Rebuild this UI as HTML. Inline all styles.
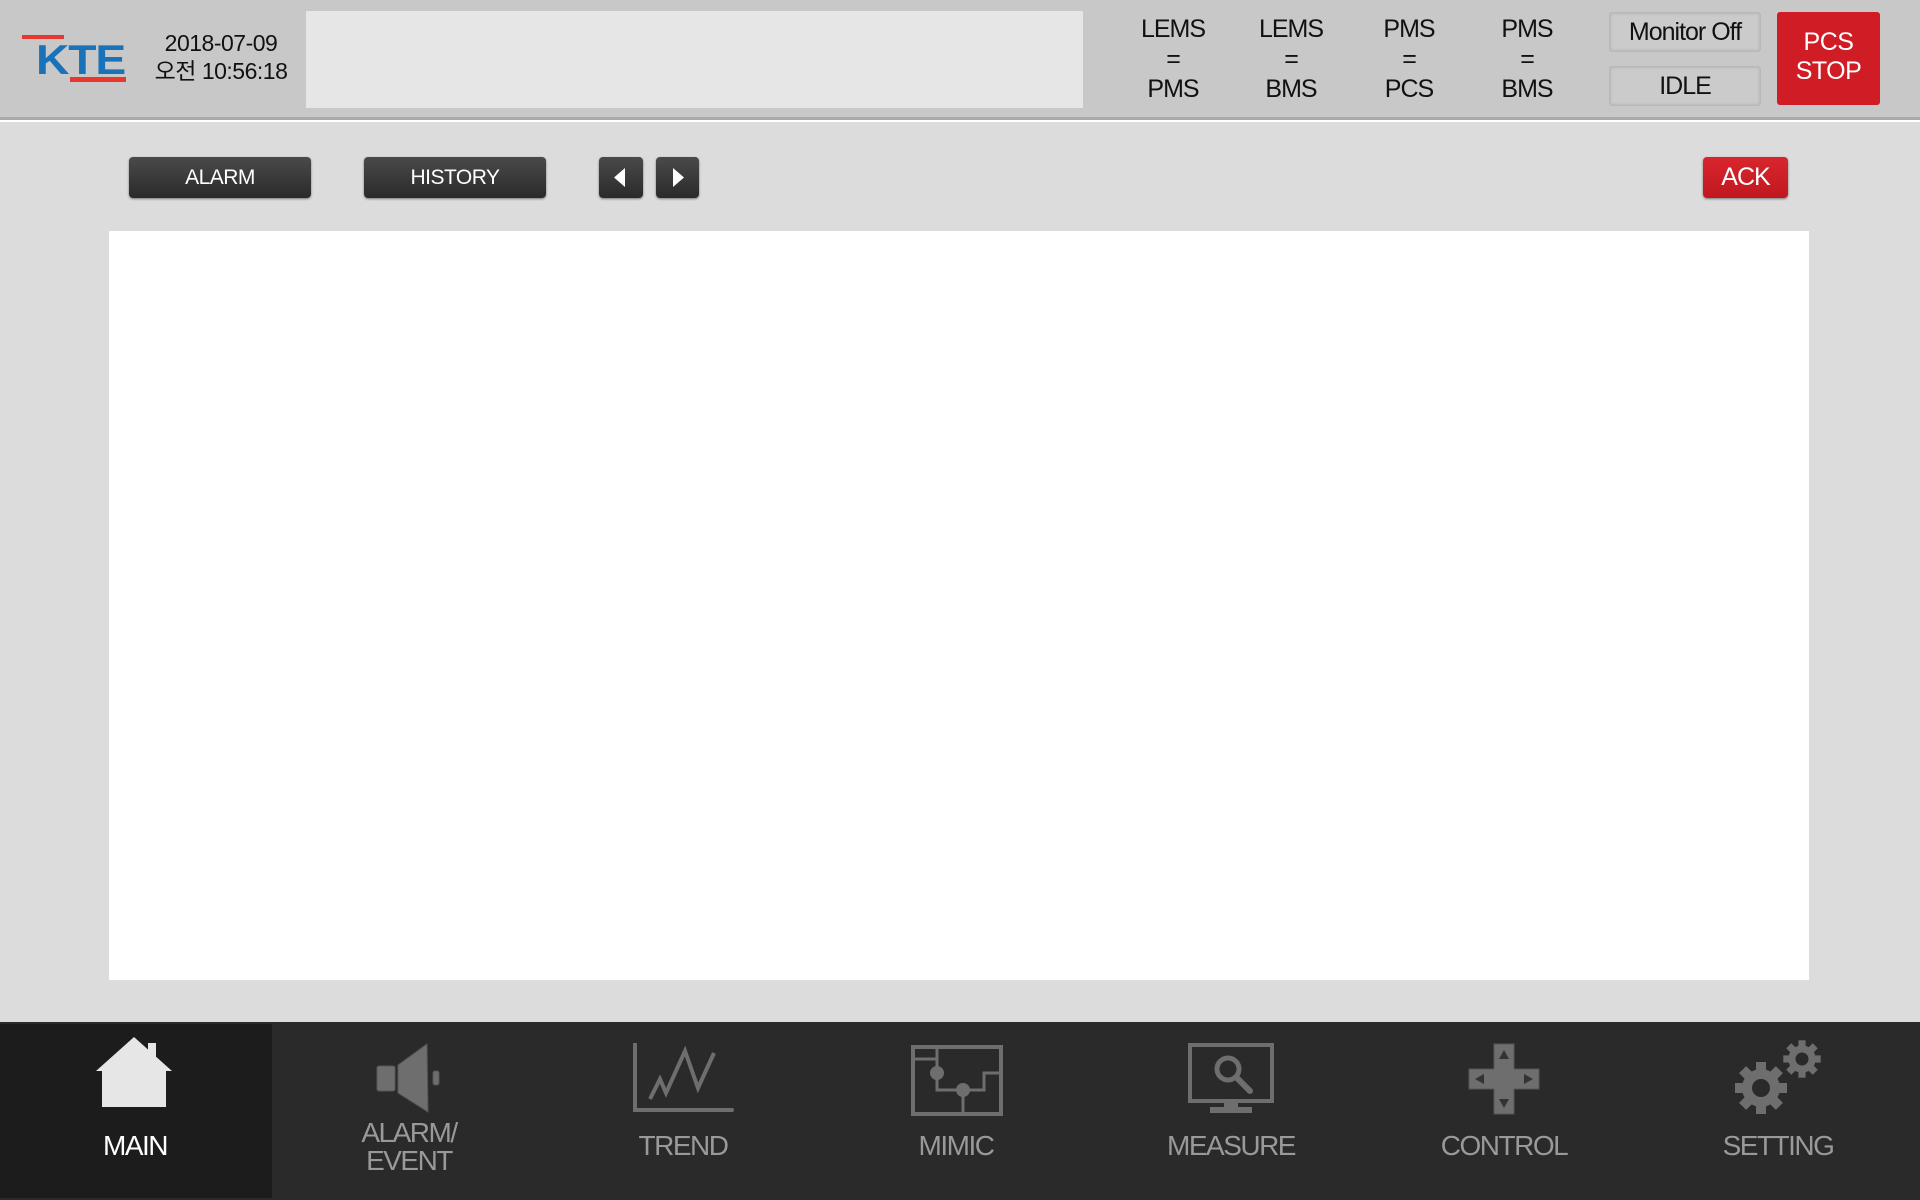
<!DOCTYPE html>
<html><head><meta charset="utf-8"><style>
*{margin:0;padding:0;box-sizing:border-box}
body{width:1920px;height:1200px;overflow:hidden;background:#dcdcdc;font-family:"Liberation Sans","Noto Sans CJK KR",sans-serif;position:relative}
.a{position:absolute}
.hdr{left:0;top:0;width:1920px;height:120px;background:#c8c8c8;border-bottom:3px solid #aaa}
.wl{left:0;top:120px;width:1920px;height:2px;background:#fff}
.st{width:120px;text-align:center;font-size:25px;color:#111;line-height:30px;letter-spacing:-1px}
.gb{background:#cbcbcb;border:1px solid #b8b8b8;border-radius:3px;box-shadow:inset 0 0 3px #aaa;text-align:center;font-size:25px;color:#111;letter-spacing:-1px}
.db{background:linear-gradient(#4a4a4a,#2a2a2a);border-radius:4px;box-shadow:0 1px 2px #777;color:#fff;font-size:21px;text-align:center;line-height:41px;letter-spacing:-0.5px}
.ft{left:0;top:1022px;width:1920px;height:178px;background:#2a2a2a}
.lb{width:274px;text-align:center;font-size:28px;color:#999;letter-spacing:-1.5px;line-height:30px}
</style></head><body>
<div class="a hdr"></div><div class="a wl"></div>
<div class="a" style="left:22px;top:35px;width:42px;height:4px;background:#e8372c"></div>
<div class="a" style="left:70px;top:77px;width:56px;height:5px;background:#e8372c"></div>
<div class="a" style="left:36px;top:38px;font-size:42px;font-weight:bold;color:#1a72b8;letter-spacing:-1px;line-height:44px;transform:scaleX(1.1);transform-origin:left">KTE</div>
<div class="a" style="left:148px;top:29px;width:146px;font-size:23px;line-height:28px;text-align:center;color:#111;letter-spacing:-0.5px">2018-07-09<br>오전 10:56:18</div>
<div class="a" style="left:306px;top:11px;width:777px;height:97px;background:#e6e6e6"></div>
<div class="a st" style="left:1113px;top:14px">LEMS<br>=<br>PMS</div>
<div class="a st" style="left:1231px;top:14px">LEMS<br>=<br>BMS</div>
<div class="a st" style="left:1349px;top:14px">PMS<br>=<br>PCS</div>
<div class="a st" style="left:1467px;top:14px">PMS<br>=<br>BMS</div>
<div class="a gb" style="left:1609px;top:12px;width:152px;height:40px;line-height:38px">Monitor Off</div>
<div class="a gb" style="left:1609px;top:66px;width:152px;height:40px;line-height:38px">IDLE</div>
<div class="a" style="left:1777px;top:12px;width:103px;height:93px;background:#d01c24;border-radius:3px;color:#fff;font-size:25px;line-height:29px;text-align:center;padding-top:16px;letter-spacing:-0.5px">PCS<br>STOP</div>
<div class="a db" style="left:129px;top:157px;width:182px;height:41px">ALARM</div>
<div class="a db" style="left:364px;top:157px;width:182px;height:41px">HISTORY</div>
<div class="a db" style="left:599px;top:157px;width:44px;height:41px"><svg width="44" height="41"><path d="M26 11 L15 20.5 L26 30Z" fill="#fff"/></svg></div>
<div class="a db" style="left:656px;top:157px;width:43px;height:41px"><svg width="43" height="41"><path d="M17 11 L28 20.5 L17 30Z" fill="#fff"/></svg></div>
<div class="a" style="left:1703px;top:157px;width:85px;height:41px;background:linear-gradient(#d8262d,#c01820);border-radius:4px;box-shadow:0 1px 2px #777;color:#fff;font-size:25px;text-align:center;line-height:40px;letter-spacing:-1px">ACK</div>
<div class="a" style="left:109px;top:231px;width:1700px;height:749px;background:#fff"></div>
<div class="a ft"></div>
<div class="a" style="left:0;top:1024px;width:272px;height:174px;background:#1c1c1c"></div>
<svg class="a" style="left:96px;top:1037px" width="76" height="70"><path d="M38 0 L76 34 L70 34 L70 70 L6 70 L6 34 L0 34 Z" fill="#e6e6e6"/><rect x="52" y="6" width="8" height="14" fill="#e6e6e6"/></svg>
<svg class="a" style="left:376px;top:1043px" width="66" height="70" fill="#6e6e6e" stroke="#555" stroke-width="1"><rect x="1" y="23" width="18" height="25" rx="2"/><path d="M22 22 L51 1 L52 69 L22 50Z"/><rect x="57" y="28" width="6" height="14" rx="2"/></svg>
<svg class="a" style="left:632px;top:1043px" width="102" height="72" fill="none" stroke="#6e6e6e" stroke-width="4"><path d="M3 0 V67 H100" stroke-linecap="round"/><path d="M18 56 L28 36 L34 50 L53 8 L66 45 L82 10"/></svg>
<svg class="a" style="left:911px;top:1045px" width="92" height="72" fill="none" stroke="#6e6e6e" stroke-width="4"><rect x="2" y="2" width="88" height="67"/><path d="M2 14 H26 V2 M26 14 V45 H52 V67 M52 45 H73 V28 H90" stroke-width="3"/><circle cx="26" cy="28" r="5" fill="#6e6e6e"/><circle cx="52" cy="45" r="5" fill="#6e6e6e"/></svg>
<svg class="a" style="left:1188px;top:1043px" width="86" height="72"><rect x="2" y="2" width="82" height="56" fill="none" stroke="#6e6e6e" stroke-width="4"/><circle cx="40" cy="26" r="11" fill="none" stroke="#6e6e6e" stroke-width="5"/><path d="M48 34 L62 48" stroke="#6e6e6e" stroke-width="6" stroke-linecap="round"/><rect x="36" y="58" width="14" height="8" fill="#6e6e6e"/><rect x="22" y="64" width="42" height="6" fill="#6e6e6e"/></svg>
<svg class="a" style="left:1468px;top:1043px" width="72" height="72"><path d="M26 1 H46 V26 H71 V46 H46 V71 H26 V46 H1 V26 H26Z" fill="#6e6e6e" stroke="#555"/><path d="M36 7 L31 16 H41Z M36 65 L31 56 H41Z M7 36 L16 31 V41Z M65 36 L56 31 V41Z" fill="#333"/></svg>
<svg class="a" style="left:1735px;top:1038px" width="88" height="78" fill="#6e6e6e"><g transform="translate(26,50)"><circle r="19"/><g id="t"><rect x="-5" y="-26" width="10" height="10"/></g><use href="#t" transform="rotate(45)"/><use href="#t" transform="rotate(90)"/><use href="#t" transform="rotate(135)"/><use href="#t" transform="rotate(180)"/><use href="#t" transform="rotate(225)"/><use href="#t" transform="rotate(270)"/><use href="#t" transform="rotate(315)"/><circle r="9" fill="#2a2a2a"/></g><g transform="translate(67,21) scale(0.72)"><circle r="19"/><use href="#t"/><use href="#t" transform="rotate(45)"/><use href="#t" transform="rotate(90)"/><use href="#t" transform="rotate(135)"/><use href="#t" transform="rotate(180)"/><use href="#t" transform="rotate(225)"/><use href="#t" transform="rotate(270)"/><use href="#t" transform="rotate(315)"/><circle r="9" fill="#2a2a2a"/></g></svg>
<div class="a lb" style="left:-2px;top:1131px;color:#fff">MAIN</div>
<div class="a lb" style="left:272px;top:1119px;line-height:28px">ALARM/<br>EVENT</div>
<div class="a lb" style="left:546px;top:1131px">TREND</div>
<div class="a lb" style="left:819px;top:1131px">MIMIC</div>
<div class="a lb" style="left:1094px;top:1131px">MEASURE</div>
<div class="a lb" style="left:1367px;top:1131px">CONTROL</div>
<div class="a lb" style="left:1641px;top:1131px">SETTING</div>
</body></html>
